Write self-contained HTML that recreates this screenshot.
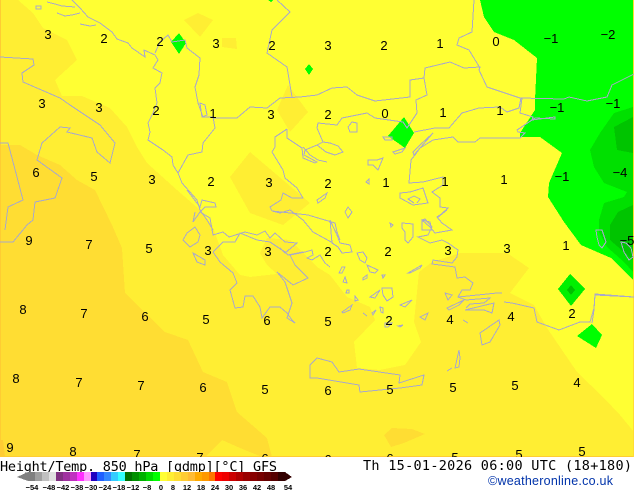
<!DOCTYPE html>
<html><head><meta charset="utf-8"><style>
html,body{margin:0;padding:0;background:#fff}
svg{display:block}
.n text{font:13px "Liberation Sans",sans-serif;fill:#000;text-anchor:middle}
.c{shape-rendering:crispEdges}
.c polyline,.c polygon{fill:none;stroke:#a9a9c9;stroke-width:1}
.l text{font:bold 7.5px "Liberation Sans",sans-serif;fill:#000;text-anchor:middle}
</style></head><body>
<svg width="634" height="490" viewBox="0 0 634 490" xmlns="http://www.w3.org/2000/svg">
<rect width="634" height="457" fill="#ffff33"/>
<g shape-rendering="crispEdges">
<!-- level 2 -->
<g fill="#ffee33">
<polygon points="0,0 18,0 33,13 43,28 67,40 77,60 55,80 62,96 82,96 110,108 127,127 137,147 147,163 177,190 200,210 212,225 223,255 240,275 250,277 277,274 267,265 260,253 267,238 290,240 317,267 330,275 347,297 370,307 375,320 354,342 357,368 380,370 405,365 421,342 414,322 419,272 432,262 460,253 507,253 529,268 510,293 534,305 547,328 577,372 604,398 620,415 634,432 634,457 0,457"/>
<polygon points="230,177 250,152 310,203 283,225 250,213"/>
<polygon points="184,20 198,13 213,20 200,37"/>
<polygon points="222,38 236,38 237,49 222,47"/>
<polygon points="277,110 288,85 308,112 290,132"/>
</g>
<!-- level 3 -->
<g fill="#ffdd33">
<polygon points="0,145 20,145 37,155 60,165 77,180 95,190 112,225 122,248 125,293 165,332 188,340 203,372 227,382 237,412 267,438 272,457 0,457"/>
<polygon points="384,435 392,428 412,429 425,434 404,443 391,447"/>
</g>
<polygon fill="#ffee33" points="205,457 222,440 240,448 262,457"/>
<polygon fill="#ffcc33" points="0,440 3,440 5,457 0,457"/>
<rect x="0" y="0" width="1" height="457" fill="#ffcc33"/>
<rect x="0" y="456" width="634" height="1" fill="#ffcc33"/>
<rect x="633" y="0" width="1" height="457" fill="#ffdd33"/>
<!-- green -->
<polygon fill="#00ff00" points="480,0 484,17 494,32 514,40 537,58 535,100 535,110 520,133 520,137 540,137 562,153 549,183 548,197 564,222 581,245 611,258 633,280 633,0"/>
<polygon fill="#00e000" points="633,107 614,113 600,133 590,150 594,167 604,183 627,192 624,197 604,203 599,220 599,232 607,247 624,262 633,272"/>
<polygon fill="#00c400" points="633,117 614,127 617,150 633,153"/>
<polygon fill="#00c400" points="633,205 618,212 610,225 610,240 633,260"/>
<polygon fill="#00f000" points="570,274 585,289 571,306 558,289"/>
<polygon fill="#00c000" points="571,285 575,290 571,295 567,290"/>
<g fill="#00ff00">
<polygon points="592,324 602,335 596,348 577,336"/>
<polygon points="404,117 414,133 405,148 388,136"/>
<polygon points="179,33 186,43 179,54 171,42"/>
<polygon points="309,64 313,69 309,75 305,69"/>
<polygon points="268,0 273,0 271,2"/>
</g>
</g>
<!-- coastlines -->
<g class="c">
<polygon points="36,6 41,6 41,9 36,9"/>
<polyline points="47,2 55,4 62,6 75,7"/>
<polyline points="57,13 65,16 72,15 80,13"/>
<polyline points="80,24 90,26 96,25"/>
<polyline points="72,0 80,8 88,17 100,23 112,32 117,39 128,43 132,48 145,57 144,50 155,55 158,60 153,68 162,73 160,83 155,88 157,103 153,113 148,123 150,132 148,140 163,150 172,157 173,165 178,173 182,183 197,200 200,210 207,220 213,230"/>
<polyline points="155,53 160,42 168,35 172,42 185,40 187,48 200,58 199,75 195,87 198,103 203,117 213,117 215,128 203,143 202,152 188,155 178,173"/>
<polyline points="213,118 237,118 250,107 267,108 280,98 300,97 317,95 332,88 347,87 357,95 375,101 410,97 410,80 424,78 425,68 450,62 464,68 480,67 479,70 487,87 520,98 564,99 569,97 587,101 607,97 612,85 634,74"/>
<polyline points="277,0 290,12 272,30 267,53 287,67 292,97"/>
<polyline points="474,0 472,32 459,38 457,45 469,50 480,68"/>
<polygon points="200,103 205,105 207,115 202,117"/>
<polyline points="0,57 33,59 34,65 22,73 23,82 60,98 70,105 100,125 115,143 110,163 97,152 92,138 67,132 70,128 60,127 42,143 37,160 62,178 55,198 35,202 33,220 27,225 13,242 0,242"/>
<polyline points="0,143 8,143 17,177 23,200 8,207 5,230"/>
<polyline points="287,129 275,137 275,147 272,152 283,170 285,178 297,188 303,198 292,198 283,193 281,200 270,207 272,211"/>
<polyline points="287,129 287,138 302,148 303,158 315,163 317,162 304,155 305,150 317,145 323,142 317,128 318,123 337,125 342,118 367,113 375,118 403,122 407,128 417,113 416,100 427,95 424,78"/>
<polyline points="317,145 326,152 335,155 343,152 338,146 330,143 323,142"/>
<polyline points="303,147 310,155 318,160 327,162"/>
<polyline points="414,132 435,128 449,128 462,113 479,108 500,107 507,112 519,108 521,98"/>
<polyline points="415,155 420,148 433,140 453,137 458,142 475,142 480,138 520,138 525,133 518,132 517,130 535,118 555,119 555,117 532,120 533,117 520,113 522,98"/>
<polygon points="414,155 433,133 420,145 413,152"/>
<polyline points="415,155 411,160 409,183 423,182 443,177 443,185 432,192 440,198 440,207 448,208 437,218 447,210"/>
<polygon points="400,193 410,192 423,188 428,203 413,205 400,198"/>
<polyline points="414,203 408,199 414,196 420,199 417,203"/>
<polyline points="447,210 437,217 442,223 452,230 435,233 430,227 422,220 425,219 432,227 428,235 418,237 430,243 442,240 448,243 458,250 457,257 452,263 433,260 432,264 440,265 455,267 457,278 465,277 473,283 470,290 462,290 458,297 497,293 502,293"/>
<polyline points="458,297 466,300 490,298 484,303 470,304 466,308"/>
<polyline points="504,302 512,303 534,308 537,322 559,330 580,322 590,322 594,308 595,294 634,297"/>
<polygon points="480,333 499,320 500,325 490,342 482,345"/>
<polygon points="465,310 494,303 492,313 484,310 470,310"/>
<polygon points="447,308 464,300 459,305 449,310"/>
<polygon points="455,368 459,350 460,358 459,367"/>
<polyline points="447,371 452,368"/>
<polygon points="317,358 332,362 339,372 359,369 400,375 399,383 424,375 422,385 400,388 360,392 359,385 317,378 310,378 310,365"/>
<polyline points="213,252 220,262 233,273 237,283 230,290 235,308 243,307 245,296 253,296 260,307 262,318 270,307 280,307 287,313 292,320 295,323 287,318 292,303 285,282 277,272 293,285 308,278 295,265 290,255 305,252 312,250 313,255 307,258 312,260 320,255 325,263 330,267"/>
<polyline points="213,252 223,242 235,242 240,233 257,240 270,242 285,252 288,255 303,252"/>
<polyline points="223,232 229,237 245,232 257,235 265,231 270,238 275,233 285,242 297,243 285,253 280,248"/>
<polyline points="187,190 200,207 202,200 215,203 216,207 205,207 200,212 193,222 195,212"/>
<polyline points="200,212 210,218 213,235 223,232"/>
<polygon points="187,233 195,227 200,235 198,242 190,247 183,240"/>
<polygon points="193,253 205,260 205,265 197,262"/>
<polyline points="272,211 280,213 290,210 303,220 313,232 333,243"/>
<polyline points="272,211 308,215 335,223 337,232 340,240"/>
<polygon points="348,127 352,122 357,123 357,132 350,132"/>
<polygon points="383,137 392,137 392,140 385,140"/>
<polygon points="393,152 405,148 402,152 395,154"/>
<polygon points="368,160 377,160 383,158 378,170 373,165 368,165"/>
<polygon points="366,182 369,179 369,184"/>
<polygon points="348,207 352,212 348,218 345,212"/>
<polygon points="422,220 430,222 432,230 422,230"/>
<polygon points="317,200 327,193 325,198 318,203"/>
<polygon points="330,220 337,235 340,243 350,245 352,252 342,253 338,247 332,243"/>
<polygon points="357,253 363,252 367,258 365,263 360,260"/>
<polygon points="367,265 378,270 375,273 370,272"/>
<polygon points="342,267 345,267 342,273 339,273"/>
<polygon points="345,277 347,283 343,282"/>
<polygon points="363,278 367,275 367,278 363,280"/>
<polygon points="382,275 385,275 383,278"/>
<polygon points="408,273 422,265 420,268 410,273"/>
<polygon points="390,223 393,225 391,227"/>
<polygon points="402,223 413,224 413,237 408,243 405,240 405,232 402,228"/>
<polygon points="382,288 392,288 393,297 387,301 383,295"/>
<polygon points="370,297 380,290 375,298"/>
<polygon points="347,290 349,290 349,293 346,293"/>
<polygon points="355,296 358,300 355,301"/>
<polygon points="342,312 352,305 350,310 343,313"/>
<polyline points="363,313 367,316"/>
<polygon points="372,313 376,310 373,315"/>
<polygon points="380,307 383,308 383,313 381,312"/>
<polygon points="385,323 392,323 388,327 385,327"/>
<polygon points="398,326 403,325 400,327"/>
<polygon points="400,305 412,300 405,307"/>
<polygon points="420,317 428,313 425,320"/>
<polygon points="445,293 452,295 448,300"/>
<polyline points="463,320 468,323"/>
<polygon points="596,230 602,230 606,242 602,248 599,245 597,237"/>
<polygon points="621,242 626,243 631,248 633,257 629,260 624,252"/>
<polyline points="592,323 594,310 595,295 634,297"/>
</g>
<!-- numbers -->
<g class="n">
<text x="48" y="39">3</text><text x="104" y="43">2</text><text x="160" y="46">2</text><text x="216" y="48">3</text><text x="272" y="50">2</text><text x="328" y="50">3</text><text x="384" y="50">2</text><text x="440" y="48">1</text><text x="496" y="46">0</text><text x="551" y="43">−1</text><text x="608" y="39">−2</text>
<text x="42" y="108">3</text><text x="99" y="112">3</text><text x="156" y="115">2</text><text x="213" y="118">1</text><text x="271" y="119">3</text><text x="328" y="119">2</text><text x="385" y="118">0</text><text x="443" y="117">1</text><text x="500" y="115">1</text><text x="557" y="112">−1</text><text x="613" y="108">−1</text>
<text x="36" y="177">6</text><text x="94" y="181">5</text><text x="152" y="184">3</text><text x="211" y="186">2</text><text x="269" y="187">3</text><text x="328" y="188">2</text><text x="386" y="187">1</text><text x="445" y="186">1</text><text x="504" y="184">1</text><text x="562" y="181">−1</text><text x="620" y="177">−4</text>
<text x="29" y="245">9</text><text x="89" y="249">7</text><text x="149" y="253">5</text><text x="208" y="255">3</text><text x="268" y="256">3</text><text x="328" y="256">2</text><text x="388" y="256">2</text><text x="448" y="255">3</text><text x="507" y="253">3</text><text x="566" y="250">1</text><text x="627" y="245">−5</text>
<text x="23" y="314">8</text><text x="84" y="318">7</text><text x="145" y="321">6</text><text x="206" y="324">5</text><text x="267" y="325">6</text><text x="328" y="326">5</text><text x="389" y="325">2</text><text x="450" y="324">4</text><text x="511" y="321">4</text><text x="572" y="318">2</text>
<text x="16" y="383">8</text><text x="79" y="387">7</text><text x="141" y="390">7</text><text x="203" y="392">6</text><text x="265" y="394">5</text><text x="328" y="395">6</text><text x="390" y="394">5</text><text x="453" y="392">5</text><text x="515" y="390">5</text><text x="577" y="387">4</text>
<text x="10" y="452">9</text><text x="73" y="456">8</text><text x="137" y="459">7</text><text x="200" y="462">7</text><text x="265" y="463">6</text><text x="328" y="464">6</text><text x="390" y="463">6</text><text x="455" y="462">5</text><text x="519" y="459">5</text><text x="582" y="456">5</text>
</g>
<rect y="457" width="634" height="33" fill="#fff"/>
<!-- header -->
<text x="0" y="471" font-family="'DejaVu Sans Mono',monospace" font-size="13.5" fill="#000" textLength="277">Height/Temp. 850 hPa [gdmp][°C] GFS</text>
<text x="363" y="470" font-family="'DejaVu Sans Mono',monospace" font-size="13.5" fill="#000" textLength="269">Th 15-01-2026 06:00 UTC (18+180)</text>
<text x="488" y="485" font-family="'Liberation Sans',sans-serif" font-size="12.5" fill="#0033aa" textLength="125">©weatheronline.co.uk</text>
<!-- colour bar -->
<g shape-rendering="crispEdges">
<polygon points="17,477 28,472 28,481" fill="#808080"/>
<rect x="28" y="472" width="7" height="9" fill="#808080"/><rect x="35" y="472" width="7" height="9" fill="#a0a0a0"/><rect x="42" y="472" width="7" height="9" fill="#c0c0c0"/><rect x="49" y="472" width="7" height="9" fill="#e0e0e0"/>
<rect x="56" y="472" width="7" height="9" fill="#803080"/><rect x="63" y="472" width="7" height="9" fill="#a030a0"/><rect x="70" y="472" width="7" height="9" fill="#c030c0"/><rect x="77" y="472" width="7" height="9" fill="#ff30ff"/><rect x="84" y="472" width="7" height="9" fill="#ff99ff"/>
<rect x="91" y="472" width="6" height="9" fill="#2000c0"/><rect x="97" y="472" width="7" height="9" fill="#2060ff"/><rect x="104" y="472" width="7" height="9" fill="#3388ff"/><rect x="111" y="472" width="7" height="9" fill="#33ccff"/>
<rect x="118" y="472" width="7" height="9" fill="#33ffff"/>
<rect x="125" y="472" width="7" height="9" fill="#007000"/><rect x="132" y="472" width="7" height="9" fill="#009000"/><rect x="139" y="472" width="7" height="9" fill="#00b000"/><rect x="146" y="472" width="7" height="9" fill="#00d800"/><rect x="153" y="472" width="7" height="9" fill="#00ff00"/>
<rect x="160" y="472" width="7" height="9" fill="#ffff33"/><rect x="167" y="472" width="7" height="9" fill="#ffee33"/><rect x="174" y="472" width="7" height="9" fill="#ffdd33"/><rect x="181" y="472" width="7" height="9" fill="#ffcc33"/><rect x="188" y="472" width="7" height="9" fill="#ffbb33"/>
<rect x="195" y="472" width="7" height="9" fill="#ffaa00"/><rect x="202" y="472" width="7" height="9" fill="#ff9900"/><rect x="209" y="472" width="6" height="9" fill="#ff7700"/>
<rect x="215" y="472" width="7" height="9" fill="#ff0000"/><rect x="222" y="472" width="7" height="9" fill="#ee0000"/><rect x="229" y="472" width="7" height="9" fill="#cc0000"/><rect x="236" y="472" width="7" height="9" fill="#b00000"/><rect x="243" y="472" width="7" height="9" fill="#990000"/><rect x="250" y="472" width="7" height="9" fill="#880000"/><rect x="257" y="472" width="7" height="9" fill="#770000"/><rect x="264" y="472" width="7" height="9" fill="#660000"/><rect x="271" y="472" width="7" height="9" fill="#550000"/><rect x="278" y="472" width="7" height="9" fill="#330000"/>
<polygon points="285,472 292,477 285,481" fill="#330000"/>
</g>
<g class="l">
<text x="32" y="490">−54</text><text x="49" y="490">−48</text><text x="63" y="490">−42</text><text x="77" y="490">−38</text><text x="91" y="490">−30</text><text x="105" y="490">−24</text><text x="119" y="490">−18</text><text x="133" y="490">−12</text><text x="147" y="490">−8</text><text x="161" y="490">0</text><text x="173" y="490">8</text><text x="187" y="490">12</text><text x="201" y="490">18</text><text x="215" y="490">24</text><text x="229" y="490">30</text><text x="243" y="490">36</text><text x="257" y="490">42</text><text x="271" y="490">48</text><text x="288" y="490">54</text>
</g>
</svg>
</body></html>
